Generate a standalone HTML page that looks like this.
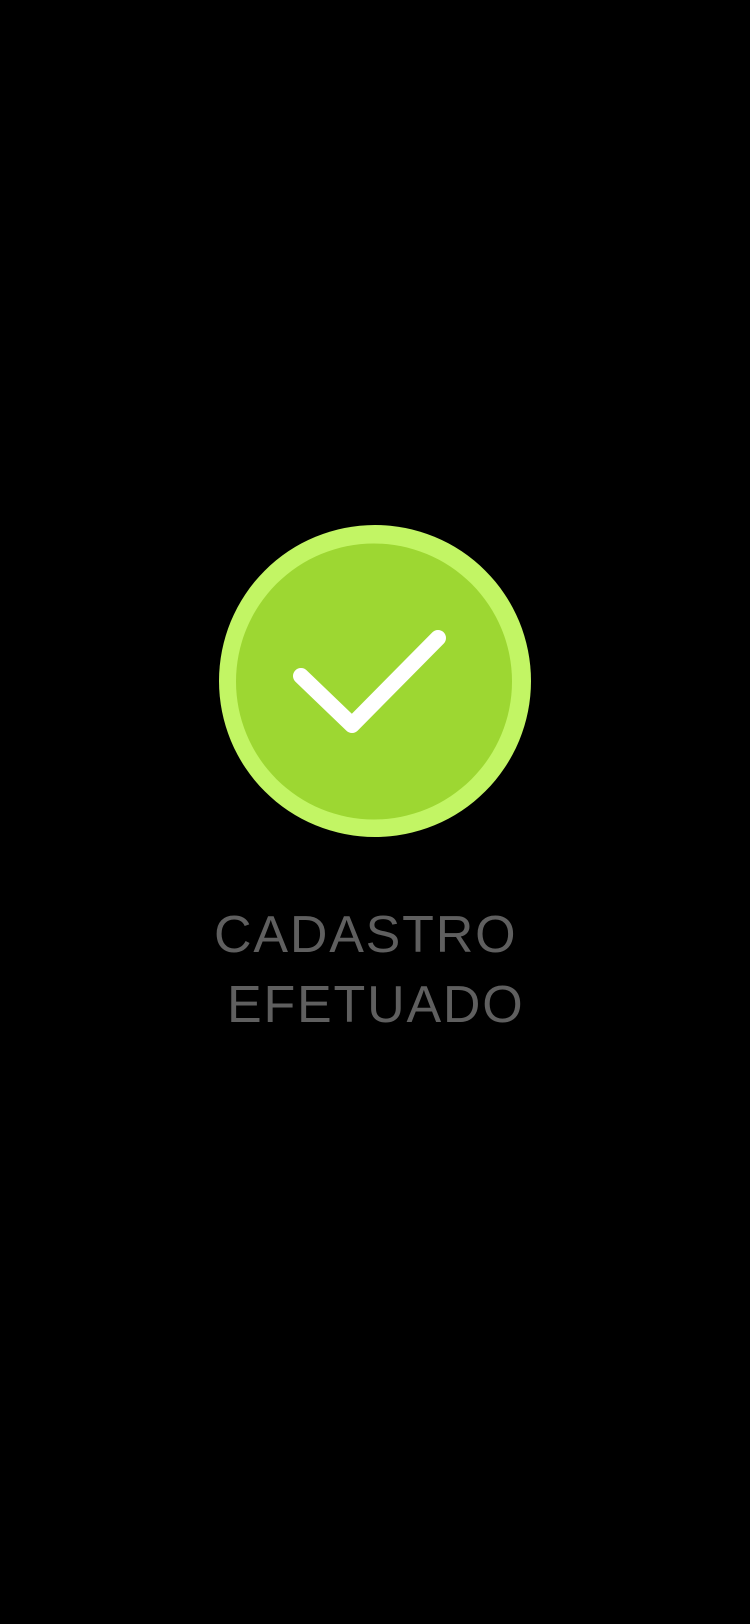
<!DOCTYPE html>
<html><head><meta charset="utf-8"><style>
html,body{margin:0;padding:0;background:#000;width:750px;height:1624px;overflow:hidden;position:relative}
.t{position:absolute;font-family:"Liberation Sans",Arial,sans-serif;font-size:52px;color:#5f5f5f;white-space:nowrap;line-height:1;letter-spacing:1.8px}
</style></head><body>
<svg width="750" height="1624" style="position:absolute;left:0;top:0">
<circle cx="375" cy="681" r="156" fill="#c2f564"/>
<circle cx="374" cy="681.5" r="138" fill="#9dd732"/>
<polyline points="301,676 352,725 438,638" fill="none" stroke="#fff" stroke-width="16" stroke-linecap="round" stroke-linejoin="round"/>
</svg>
<div class="t" style="left:214px;top:909px">CADASTRO</div>
<div class="t" style="left:227px;top:979px">EFETUADO</div>
</body></html>
